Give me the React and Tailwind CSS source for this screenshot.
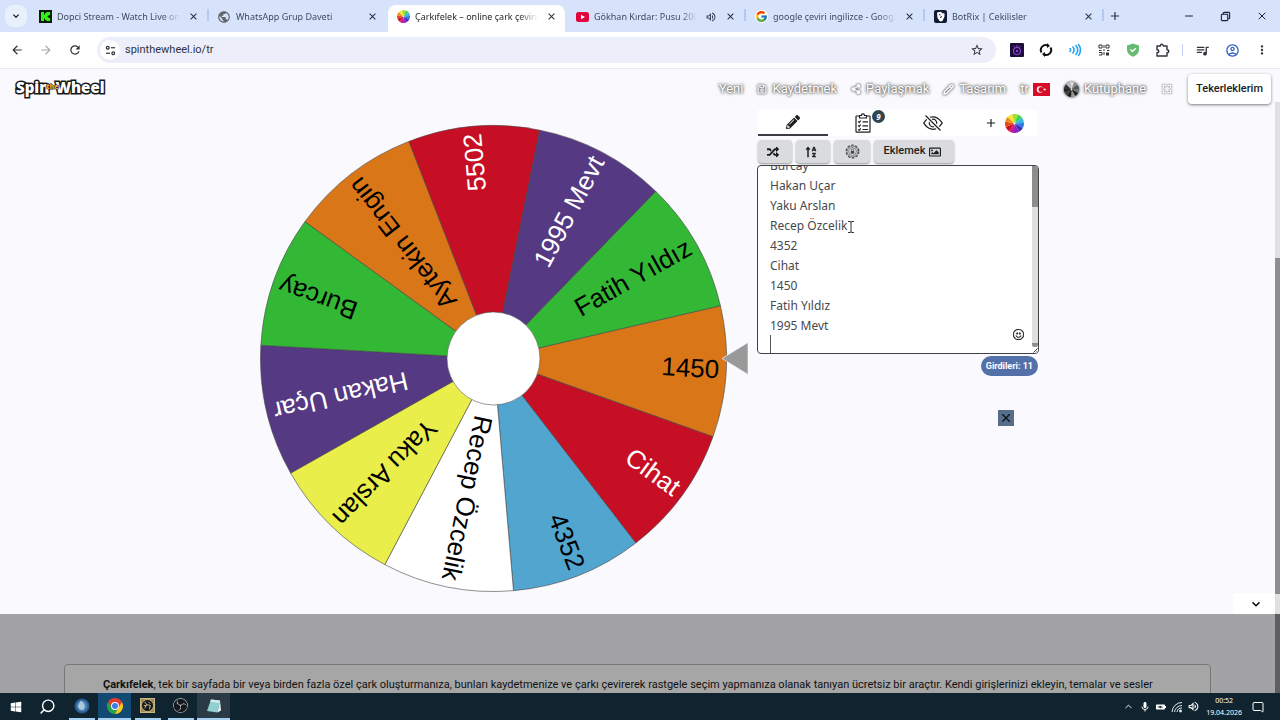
import { useEffect, useRef, useState } from 'react'
import { FaPencilAlt, FaRandom, FaSortAlphaUp, FaRegImage, FaRegSave, FaShareAlt, FaWindows } from 'react-icons/fa'
import { BsEyeSlash, BsEmojiSmile } from 'react-icons/bs'
import { FcGoogle } from 'react-icons/fc'
import { SiObsstudio } from 'react-icons/si'
import {
  MdArrowBack, MdArrowForward, MdRefresh, MdQueueMusic, MdMoreVert, MdAdd,
  MdClose, MdStarOutline, MdPublic, MdOutlineAccountCircle, MdKeyboardArrowDown, MdOutlineVolumeUp,
  MdFullscreen, MdMic, MdBatteryChargingFull,
} from 'react-icons/md'
import { ChevronUp, Copy, Minus, Pencil, Search, MessageSquare, X } from 'lucide-react'

const ENTRIES = [
  '5502', 'Aytekin Engin', 'Burcay', 'Hakan Uçar', 'Yaku Arslan', 'Recep Özcelik',
  '4352', 'Cihat', '1450', 'Fatih Yıldız', '1995 Mevt',
]

// Clockwise from the slice under the pointer.
const SLICES = [
  { name: '1450', fill: '#d97618', text: '#000' },
  { name: 'Cihat', fill: '#c60f24', text: '#fff' },
  { name: '4352', fill: '#52a5cf', text: '#000' },
  { name: 'Recep Özcelik', fill: '#ffffff', text: '#000' },
  { name: 'Yaku Arslan', fill: '#e9ee4b', text: '#000' },
  { name: 'Hakan Uçar', fill: '#553982', text: '#fff' },
  { name: 'Burcay', fill: '#33b835', text: '#000' },
  { name: 'Aytekin Engin', fill: '#d97618', text: '#000' },
  { name: '5502', fill: '#c60f24', text: '#fff' },
  { name: '1995 Mevt', fill: '#553982', text: '#fff' },
  { name: 'Fatih Yıldız', fill: '#33b835', text: '#000' },
]

const RAINBOW = ['#3fd34c', '#35b8e8', '#2c7be5', '#3b2fbf', '#8a1fc0', '#d3128c', '#c60f24', '#e8491d', '#f39019', '#f7e733', '#a4dc3a']
const GREYS = ['#8b8b8b', '#555', '#777', '#222', '#999', '#1c1c1c', '#444', '#222', '#333', '#bbb', '#ddd']

function sector(cx, cy, r, from, to) {
  const a = (from * Math.PI) / 180
  const b = (to * Math.PI) / 180
  return `M${cx} ${cy}L${cx + r * Math.cos(a)} ${cy + r * Math.sin(a)}A${r} ${r} 0 0 1 ${cx + r * Math.cos(b)} ${cy + r * Math.sin(b)}Z`
}

function MiniWheel({ colors, className }) {
  const step = 360 / colors.length
  return (
    <svg viewBox="0 0 20 20" className={className} aria-hidden="true">
      {colors.map((c, i) => (
        <path key={i} d={sector(10, 10, 10, i * step - 70, (i + 1) * step - 70)} fill={c} />
      ))}
      <circle cx="10" cy="10" r="1" fill="#fff" />
    </svg>
  )
}

// -- Browser chrome ----------------------------------------------------

function KickIcon() {
  return (
    <svg viewBox="0 0 13 13" className="w-[13px] h-[13px]">
      <rect width="13" height="13" fill="#0a1a08" />
      <path d="M2 2h3v2.500h1V3h1.500V2H11v3H9.500v1H8.500v1h1v1H11v3H7.500v-1H6V8.500H5V11H2z" fill="#2df70f" />
    </svg>
  )
}

function YoutubeIcon() {
  return (
    <svg viewBox="0 0 13 10" className="w-[13px] h-[10px]">
      <rect width="13" height="10" rx="2.500" fill="#e0043c" />
      <path d="M5 2.800v4.400L9 5z" fill="#fff" />
    </svg>
  )
}

function BotrixIcon() {
  return (
    <svg viewBox="0 0 13 13" className="w-[13px] h-[13px]">
      <rect width="13" height="13" rx="2" fill="#141a33" />
      <path d="M3 2.500l4-.8 1 1.300 2.500.500v3L8.500 11l-2.500.500L3.500 8z" fill="#fff" />
      <path d="M5 4.500l1.500.500M6 7.500l2-1" stroke="#141a33" strokeWidth="1" />
    </svg>
  )
}

const TABS = [
  { title: 'Dopci Stream - Watch Live on Kick', icon: <KickIcon />, sep: true },
  { title: 'WhatsApp Grup Daveti', icon: <MdPublic className="w-[14px] h-[14px] text-[#5f6670]" /> },
  { title: 'Çarkıfelek – online çark çevirme', icon: <MiniWheel colors={RAINBOW} className="w-[13px] h-[13px]" />, active: true },
  { title: 'Gökhan Kırdar: Pusu 2006', icon: <YoutubeIcon />, sound: true, sep: true },
  { title: 'google çeviri ingilizce - Google', icon: <span className="bg-white rounded-full"><FcGoogle className="w-[13px] h-[13px]" /></span>, sep: true },
  { title: 'BotRix | Cekilisler', icon: <BotrixIcon />, sep: true },
]

function BrowserTab({ tab }) {
  return (
    <div className="w-[179px] h-full pt-[5px] flex items-stretch min-w-0">
      <div className={`flex-1 min-w-0 flex items-center pl-2 pr-2 pb-1 ${tab.active ? 'bg-white rounded-t-lg text-[#1f2328]' : 'text-[#414b5c]'}`}>
        <span className="w-[14px] shrink-0 flex items-center justify-center">{tab.icon}</span>
        <span className="flex-1 ml-[5px] mr-2 overflow-hidden whitespace-nowrap text-[9px] leading-4 [mask-image:linear-gradient(to_right,black_85%,transparent)]">
          {tab.title}
        </span>
        {tab.sound && <MdOutlineVolumeUp className="w-[12px] h-[12px] mr-2 shrink-0" />}
        <button className="shrink-0 text-[#222a38]" aria-label="Close tab"><MdClose className="w-[11px] h-[11px]" /></button>
      </div>
      <div className={`w-[2px] h-3 mt-1 ${tab.sep ? 'bg-[#b4c8f2]' : ''}`} />
    </div>
  )
}

function TabStrip() {
  return (
    <div className="h-8 bg-[#d6e3fb] flex">
      <button className="mt-[5px] ml-[5px] mr-[3px] w-[22px] h-[22px] rounded-lg bg-[#e9f0fd] flex items-center justify-center" aria-label="Search tabs">
        <MdKeyboardArrowDown className="w-3 h-3" />
      </button>
      {TABS.map(t => <BrowserTab key={t.title} tab={t} />)}
      <button className="ml-1 self-center text-[#2b3342]" aria-label="New tab"><MdAdd className="w-[14px] h-[14px]" /></button>
      <div className="ml-auto mr-3 flex items-center gap-[25px] text-[#1c2330]">
        <button aria-label="Minimize"><Minus className="w-3 h-3" strokeWidth={2} /></button>
        <button aria-label="Restore">
          <svg viewBox="0 0 12 12" className="w-[11px] h-[11px]" fill="none" stroke="currentColor" strokeWidth="1.200">
            <rect x="1.500" y="3.500" width="7" height="7" rx="1" />
            <path d="M3.500 3.500v-1q0-1 1-1h5q1 0 1 1v5q0 1-1 1h-1" />
          </svg>
        </button>
        <button aria-label="Close window"><X className="w-3 h-3" strokeWidth={2} /></button>
      </div>
    </div>
  )
}

function Extensions() {
  return (
    <div className="flex items-center gap-[15px] text-[#30343b]">
      <button aria-label="Night extension">
        <svg viewBox="0 0 14 14" className="w-[14px] h-[14px]">
          <rect width="14" height="14" rx="1" fill="#1c0f38" />
          <circle cx="7" cy="8" r="3.500" fill="none" stroke="#8d3ddb" strokeWidth="1.200" />
          <circle cx="7" cy="8" r="1.200" fill="#8d3ddb" />
          <path d="M7 2v3M3.500 3l1.500 1.500M10.500 3L9 4.500" stroke="#a65ae8" strokeWidth="0.800" />
        </svg>
      </button>
      <button aria-label="Refresh extension">
        <svg viewBox="0 0 14 14" className="w-[14px] h-[14px]" fill="none" stroke="#111" strokeWidth="2">
          <path d="M2.500 9.500A5 5 0 0 1 9 2.500M11.500 4.500A5 5 0 0 1 5 11.500" />
          <path d="M8 0l3 3-3 2zM6 14l-3-3 3-2z" fill="#111" stroke="none" />
        </svg>
      </button>
      <button aria-label="Sound extension">
        <svg viewBox="0 0 14 14" className="w-[14px] h-[14px]" fill="none" stroke="#24a3ee" strokeWidth="1.600" strokeLinecap="round">
          <path d="M2 5.500q1.200 1.500 0 3M5 4q2.200 3 0 6M8 2.500q3.500 4.500 0 9M10.500 1.500q4 5.500 0 11" />
        </svg>
      </button>
      <button aria-label="QR extension">
        <svg viewBox="0 0 14 14" className="w-[14px] h-[14px]" fill="none" stroke="#333" strokeWidth="1">
          <path d="M2 2h3v3H2zM7 2v3M9 2h3v3H9zM2 7.500h2.500M6 7h2M2 9.500h3v2.500H2M7 9v3M10 7.500h2.500" />
          <path d="M9 9.500h3v3H9z" fill="#333" stroke="none" />
        </svg>
      </button>
      <button aria-label="Shield extension">
        <svg viewBox="0 0 14 14" className="w-[14px] h-[14px]">
          <path d="M7 .500l6 2v4c0 3.500-2.500 6-6 7.200C3.500 12.500 1 10 1 6.500v-4z" fill="#65bb71" />
          <path d="M4.500 6.500l2 2 3.300-3.300" fill="none" stroke="#fff" strokeWidth="1.400" />
        </svg>
      </button>
      <button aria-label="Extensions">
        <svg viewBox="0 0 15 15" className="w-[15px] h-[15px]" fill="none" stroke="currentColor" strokeWidth="1.400" strokeLinejoin="round">
          <path d="M2 3h3.300q0-1.800 1.500-1.800T8.300 3H12v3.700q1.800 0 1.800 1.500T12 9.700V13H2V9.700q1.800 0 1.800-1.500T2 6.700z" />
        </svg>
      </button>
      <span className="w-px h-3 -mx-[3px] bg-[#c3d1ee]" />
      <button aria-label="Media"><MdQueueMusic className="w-[15px] h-[15px]" /></button>
      <button aria-label="Profile"><MdOutlineAccountCircle className="w-[15px] h-[15px] text-[#2f5bc4]" /></button>
      <button aria-label="Menu"><MdMoreVert className="w-[14px] h-[14px]" /></button>
    </div>
  )
}

function Toolbar() {
  return (
    <div className="h-[37px] bg-white border-b border-[#e9ebef] flex items-center pl-[10px] pr-[11px]">
      <div className="flex gap-[15px] text-[#30343b]">
        <button aria-label="Back"><MdArrowBack className="w-[14px] h-[14px]" /></button>
        <button aria-label="Forward" className="text-[#a6a9ae]"><MdArrowForward className="w-[14px] h-[14px]" /></button>
        <button aria-label="Reload"><MdRefresh className="w-[14px] h-[14px]" /></button>
      </div>
      <div className="flex-1 ml-[15px] mr-[14px] h-[26px] rounded-full bg-[#eceffa] flex items-center pl-[3px] pr-3">
        <span className="w-5 h-5 rounded-full bg-white flex items-center justify-center">
          <svg viewBox="0 0 12 12" className="w-[11px] h-[11px]" fill="none" stroke="#30343b" strokeWidth="1.300">
            <circle cx="3" cy="3" r="1.500" /><path d="M6.500 3H11" />
            <circle cx="9" cy="9" r="1.500" /><path d="M1 9h4.500" />
          </svg>
        </span>
        <input
          aria-label="Address"
          defaultValue="spinthewheel.io/tr"
          className="flex-1 ml-[5px] bg-transparent outline-none font-['Roboto'] text-[11px] leading-4 text-[#30343b]"
        />
        <button aria-label="Bookmark"><MdStarOutline className="w-[14px] h-[14px] text-[#30343b]" /></button>
      </div>
      <Extensions />
    </div>
  )
}

// -- Page --------------------------------------------------------------

function Logo() {
  return (
    <a href="#" className="flex items-center font-['Open_Sans'] font-extrabold text-[15px] leading-5 text-white [-webkit-text-stroke:3px_#16181c] [paint-order:stroke_fill]">
      <span>Spin</span>
      <span className="relative z-10 -mx-[3px] text-[7px] leading-3 text-[#f2a226] [-webkit-text-stroke:1px_#16181c]">the</span>
      <span>Wheel</span>
    </a>
  )
}

function NavLink({ icon, children }) {
  return (
    <a href="#" className="flex items-center gap-[5px] text-white [text-shadow:0_0_2px_#555,0_0_3px_#777,0_0_4px_#999]">
      {icon && <span className="[filter:drop-shadow(0_0_1px_#666)_drop-shadow(0_0_1px_#999)]">{icon}</span>}
      {children}
    </a>
  )
}

function Flag() {
  return (
    <svg viewBox="0 0 17 13" className="w-[17px] h-[13px]">
      <rect width="17" height="13" fill="#d80a27" />
      <circle cx="7" cy="6.500" r="3.200" fill="#fff" />
      <circle cx="8" cy="6.500" r="2.500" fill="#d80a27" />
      <path d="M10 6.500l1.200-.4.100-1.200.7 1 1.200-.4-.7 1 .7 1-1.200-.4-.7 1-.1-1.200z" fill="#fff" />
    </svg>
  )
}

function SiteHeader() {
  return (
    <header className="h-10 flex items-center pl-4 pr-1">
      <div className="mb-1"><Logo /></div>
      <nav className="ml-auto flex items-center gap-[14px] font-['Roboto'] text-[13px] leading-5">
        <NavLink>Yeni</NavLink>
        <NavLink icon={<FaRegSave className="w-[10px] h-[10px]" />}>Kaydetmek</NavLink>
        <NavLink icon={<FaShareAlt className="w-[10px] h-[10px]" />}>Paylaşmak</NavLink>
        <NavLink icon={<Pencil className="w-[11px] h-[11px]" strokeWidth={3} />}>Tasarım</NavLink>
        <a href="#" className="flex items-center gap-1 text-white [text-shadow:0_0_2px_#555,0_0_3px_#777,0_0_4px_#999]">tr <Flag /></a>
        <NavLink icon={<MiniWheel colors={GREYS} className="w-[15px] h-[15px]" />}>Kütüphane</NavLink>
        <button className="text-white [filter:drop-shadow(0_0_1px_#777)_drop-shadow(0_0_1px_#999)]" aria-label="Fullscreen">
          <MdFullscreen className="w-[14px] h-[14px]" />
        </button>
        <button className="h-[30px] px-2 rounded bg-white text-[11px] font-medium text-[#222] shadow-[0_1px_3px_rgba(0,0,0,0.5)]">
          Tekerleklerim
        </button>
      </nav>
    </header>
  )
}

function Wheel() {
  const step = 360 / SLICES.length
  return (
    <svg viewBox="0 0 490 469" className="w-[490px] shrink-0" role="img" aria-label="Çarkıfelek">
      {SLICES.map((s, i) => (
        <path
          key={s.name}
          d={sector(234.5, 234.5, 233, i * step - 13.1, (i + 1) * step - 13.1)}
          fill={s.fill}
          stroke="#444"
          strokeWidth="0.6"
        />
      ))}
      {SLICES.map((s, i) => (
        <text
          key={s.name}
          transform={`translate(234.500 234.500) rotate(${(i + 0.5) * step - 13.1})`}
          x="226"
          y="-2"
          textAnchor="end"
          dominantBaseline="central"
          fill={s.text}
          fontSize="26"
          className="font-['Liberation_Sans']"
        >
          {s.name}
        </text>
      ))}
      <circle cx="234.500" cy="234.500" r="46.500" fill="#fff" stroke="#555" strokeWidth="0.6" />
      <path d="M463 234.500l26-16v32z" fill="#999" stroke="#fff" strokeWidth="0.6" />
    </svg>
  )
}

function ClipboardIcon() {
  return (
    <svg viewBox="0 0 16 20" className="w-4 h-5" fill="none" stroke="#222" strokeWidth="1.200">
      <path d="M4.500 3H1.600q-.6 0-.6.600v15q0 .6.6.6h12.800q.6 0 .6-.6v-15q0-.6-.6-.6h-2.900" />
      <path d="M4.500 5V2.500h2q0-1.700 1.500-1.700t1.500 1.700h2V5z" />
      <path d="M3.200 8.500l1 1 1.600-2M7.500 8.800H13M3.200 12.500l1 1 1.600-2M7.500 12.800H13M3.200 16.300l1 1 1.600-2M7.500 16.500H13" />
    </svg>
  )
}

function GearLockIcon() {
  return (
    <svg viewBox="0 0 16 16" className="w-[15px] h-[15px]" fill="none" stroke="#444">
      <circle cx="8" cy="8" r="6.800" strokeWidth="1.200" strokeDasharray="2.700 1.570" />
      <circle cx="8" cy="8" r="5.800" strokeWidth="0.700" />
      <circle cx="8" cy="8" r="4.200" strokeWidth="0.600" />
      <path d="M6.800 7.500V6.500q0-1.200 1.200-1.200t1.200 1.200v1" strokeWidth="0.800" />
      <rect x="6.100" y="7.500" width="3.800" height="2.800" fill="#444" stroke="none" />
    </svg>
  )
}

const toolButton = 'h-[23px] rounded-sm bg-[#dadbdf] flex items-center justify-center text-[#1d1f22] shadow-[0_1px_2px_rgba(0,0,0,0.4)]'

function EntryPanel() {
  const [text, setText] = useState(ENTRIES.join('\n') + '\n')
  const area = useRef(null)

  useEffect(() => {
    area.current.scrollTop = 54
  }, [])

  return (
    <aside className="w-[282px] shrink-0 flex flex-col">
      <div className="mx-px mt-px h-[26px] bg-white grid grid-cols-4 text-[#1d1f22]">
        <button className="border-b-2 border-[#3b3f45] flex items-center justify-center" aria-label="Girdiler">
          <FaPencilAlt className="w-[14px] h-[14px]" />
        </button>
        <button className="relative flex items-center justify-center" aria-label="Sonuçlar">
          <ClipboardIcon />
          <span className="absolute left-[44px] top-0 w-[13px] h-[13px] rounded-full bg-[#2f4550] text-white text-[8px] leading-[13px] font-bold italic text-center">9</span>
        </button>
        <button className="flex items-center justify-center" aria-label="Gizle"><BsEyeSlash className="w-[20px] h-[20px]" /></button>
        <button className="flex items-center justify-end gap-1 pr-[14px]" aria-label="Çark ekle">
          <MdAdd className="w-[14px] h-[14px] mr-[3px]" />
          <MiniWheel colors={RAINBOW} className="w-[19px] h-[19px]" />
        </button>
      </div>

      <div className="mx-px mt-1 mb-[2px] flex gap-1">
        <button className={`${toolButton} w-[34px] pr-1`} aria-label="Karıştır"><FaRandom className="w-[12px] h-[12px]" /></button>
        <button className={`${toolButton} w-[34px] pr-1`} aria-label="Sırala"><FaSortAlphaUp className="w-[12px] h-[12px]" /></button>
        <button className={`${toolButton} w-9`} aria-label="Gelişmiş"><GearLockIcon /></button>
        <button className={`${toolButton} w-20 gap-1 pr-[3px] font-['Roboto'] text-[11px] font-medium`}>
          Eklemek <FaRegImage className="w-[12px] h-[12px]" />
        </button>
      </div>

      <div className="relative h-[189px] rounded border border-[#3f4247] bg-white overflow-hidden flex">
        <textarea
          ref={area}
          aria-label="Girdiler listesi"
          value={text}
          onChange={e => setText(e.target.value)}
          className="flex-1 resize-none outline-none py-1 pl-[12px] text-[12px] leading-5 text-[#47494d] [scrollbar-width:none]"
        />
        <div className="w-[6px] bg-[#dedede] flex flex-col">
          <div className="h-[41px] bg-[#8d8d8d]" />
          <div className="mt-auto h-1 rounded-b bg-[#8d8d8d]" />
          <svg viewBox="0 0 6 6" className="w-[6px] h-[6px]" fill="none" stroke="#333">
            <rect width="6" height="6" fill="#fff" stroke="none" />
            <path d="M1.500 5.500l4-4M4 5.500L5.500 4" />
          </svg>
        </div>
        <span className="absolute left-[12px] bottom-0 w-px h-[18px] bg-[#555]" />
        <button className="absolute right-[14px] bottom-[13px] text-[#111]" aria-label="Emoji">
          <BsEmojiSmile className="w-[11px] h-[11px]" stroke="currentColor" strokeWidth={0.5} />
        </button>
        <svg viewBox="0 0 6 12" className="absolute left-[90px] top-[55px] w-[6px] h-3" fill="none" stroke="#333" strokeWidth="1">
          <path d="M0 .5h2q1 0 1 1v9q0 1-1 1H0M6 .5H4q-1 0-1 1M3 10.500q0 1 1 1h2" />
        </svg>
      </div>

      <span className="self-end mt-[2px] mr-px h-5 px-[5px] rounded-full bg-[#5470a8] text-white font-['Roboto'] text-[9px] leading-5 font-bold">
        Girdileri: 11
      </span>
      <button className="self-end mt-[34px] mr-[25px] w-4 h-4 bg-[#586c8c] text-[#0d1118] flex items-center justify-center" aria-label="Kapat">
        <X className="w-[14px] h-[14px]" strokeWidth={2} />
      </button>
    </aside>
  )
}

function PageScrollbar() {
  return (
    <div className="w-[5px] shrink-0 flex flex-col bg-[#5f5f5f]">
      <div className="h-[33px] bg-[#fafafe]" />
      <div className="h-[156px] bg-[#e0e0e1]" />
      <div className="h-[336px] bg-[#8e8e8f]" />
      <div className="h-5 bg-[#e0e0e1]" />
    </div>
  )
}

function Page() {
  return (
    <div className="flex-1 min-h-0 flex overflow-hidden">
      <div className="flex-1 min-w-0 flex flex-col bg-[#a3a3a5]">
        <section className="bg-[#fafafe] flex flex-col">
          <SiteHeader />
          <main className="flex justify-center gap-2 pl-[23px]">
            <div className="pt-[15px]"><Wheel /></div>
            <EntryPanel />
          </main>
          <button className="self-end w-[42px] h-[21px] pl-1 bg-white flex items-center justify-center" aria-label="Aşağı">
            <MdKeyboardArrowDown className="w-4 h-4" />
          </button>
        </section>
        <section className="mx-16 mt-[50px] px-[38px] py-3 border border-[#77777a] rounded bg-[#a6a6a6]">
          <p className="font-['Roboto'] text-[11px] leading-4 whitespace-nowrap text-[#111]">
            <b>Çarkıfelek</b>, tek bir sayfada bir veya birden fazla özel çark oluşturmanıza, bunları kaydetmenize ve çarkı çevirerek rastgele seçim yapmanıza olanak tanıyan ücretsiz bir araçtır. Kendi girişlerinizi ekleyin, temalar ve sesler
          </p>
        </section>
      </div>
      <PageScrollbar />
    </div>
  )
}

// -- Taskbar -----------------------------------------------------------

function ChromeIcon() {
  return (
    <svg viewBox="0 0 16 16" className="w-4 h-4">
      <path d={sector(8, 8, 8, -150, -30)} fill="#e33b2e" />
      <path d={sector(8, 8, 8, -30, 90)} fill="#fbc916" />
      <path d={sector(8, 8, 8, 90, 210)} fill="#2ba24c" />
      <path d="M8 4.200h7L11.300 10zM4.700 10L1.100 4 8 4.200z" fill="#e33b2e" />
      <path d="M4.700 9.900L1.100 4 4.200 8zM11.300 9.900L8 16l-1-4z" fill="#2ba24c" />
      <circle cx="8" cy="8" r="3.900" fill="#fff" />
      <circle cx="8" cy="8" r="3" fill="#3b7ded" />
    </svg>
  )
}

const APPS = [
  {
    name: 'Firefly',
    icon: (
      <svg viewBox="0 0 16 16" className="w-4 h-4">
        <circle cx="8" cy="8" r="7.500" fill="#285b91" />
        <circle cx="8" cy="8" r="5.500" fill="#4b82b5" />
        <path d="M7 2.500q5 4 3.500 7.500T5.500 11 7 2.500z" fill="#a9c8de" />
      </svg>
    ),
  },
  { name: 'Chrome', icon: <ChromeIcon />, tone: 'bg-[#124a73]' },
  {
    name: 'Game',
    icon: (
      <svg viewBox="0 0 16 16" className="w-[15px] h-[15px]" fill="none" stroke="#d3bd83">
        <rect x=".5" y=".5" width="15" height="15" fill="#9c8a58" />
        <circle cx="8" cy="8" r="6.500" fill="#161a1c" />
        <path d="M5 4l2 3-2 4M7 7l4 1-1 4M9 4l2 2M4 8h3" />
      </svg>
    ),
  },
  { name: 'OBS', icon: <SiObsstudio className="w-[15px] h-[15px] text-[#c9ced2] bg-[#15191d] rounded-full" /> },
  {
    name: 'Notepad',
    icon: (
      <svg viewBox="0 0 16 16" className="w-4 h-4">
        <path d="M5 1.500l9 1-2.500 12L1 13z" fill="#8fd0d3" />
        <path d="M5 1.500l9 1-.6 2.500-9.200-1.200z" fill="#d9ecec" />
        <path d="M14 2.500l1 10-3.500 2z" fill="#e6f2f0" />
      </svg>
    ),
    tone: 'bg-[#2a3b46]',
  },
]

function Taskbar() {
  return (
    <footer className="h-[27px] shrink-0 bg-[#10242f] flex items-stretch text-white">
      <button className="w-8 flex items-center justify-center" aria-label="Start"><FaWindows className="w-[12px] h-[12px]" /></button>
      <button className="w-[33px] pr-[2px] flex items-center justify-center" aria-label="Search"><Search className="w-[17px] h-[17px] -scale-x-100" strokeWidth={2} /></button>
      {APPS.map(a => (
        <button key={a.name} className={`w-[33px] px-px flex flex-col items-center ${a.tone || ''}`} aria-label={a.name}>
          <span className="flex-1 flex items-center">{a.icon}</span>
          <span className={`h-[2px] bg-[#a5d0f2] ${a.tone ? 'w-[33px]' : 'w-[26px]'}`} />
        </button>
      ))}
      <div className="ml-auto mr-4 flex items-center">
        <div className="flex items-center gap-1 mr-[6px]">
          <ChevronUp className="w-[11px] h-[11px] mr-px" />
          <MdMic className="w-[12px] h-[12px]" />
          <MdBatteryChargingFull className="w-[12px] h-[12px] rotate-90" />
          <svg viewBox="0 0 12 12" className="w-[12px] h-[12px]" fill="none" stroke="#e3e8ea">
            <path d="M1 11A10 10 0 0 1 11 1.500M3.500 11A7.500 7.500 0 0 1 11 4.500M6 11a5 5 0 0 1 5-4" />
            <circle cx="9.500" cy="10" r="1" fill="#fff" />
          </svg>
          <MdOutlineVolumeUp className="w-[13px] h-[13px]" />
        </div>
        <div className="text-center text-[7px] leading-3 mr-[10px]">
          <div>00:52</div>
          <div>19.04.2026</div>
        </div>
        <button aria-label="Notifications"><MessageSquare className="w-3 h-3 -scale-x-100" strokeWidth={2} /></button>
      </div>
    </footer>
  )
}

export default function App() {
  return (
    <div className="h-screen flex flex-col overflow-hidden font-['Noto_Sans',sans-serif]">
      <TabStrip />
      <Toolbar />
      <Page />
      <Taskbar />
    </div>
  )
}
